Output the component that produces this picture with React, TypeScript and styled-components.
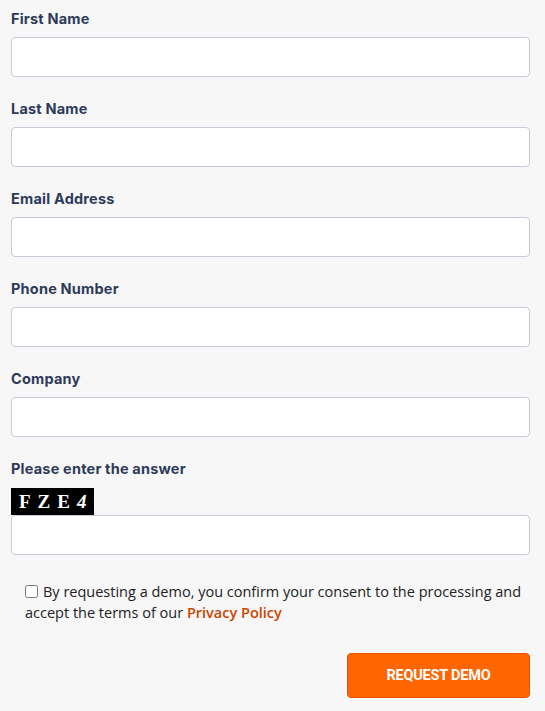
import styled, { createGlobalStyle } from "styled-components";

const GlobalStyle = createGlobalStyle`
    html, body {
        margin: 0;
        padding: 0;
        background: #f7f7f7;
    }
`;

const Form = styled.form`
    width: 545px;
    box-sizing: border-box;
    padding: 9px 15px 13px 11px;
    display: flex;
    flex-direction: column;
`;

const Field = styled.div`
    display: flex;
    flex-direction: column;
    margin-bottom: 22px;
`;

const Label = styled.label`
    font-family: Inter, "Open Sans", sans-serif;
    font-weight: 700;
    font-size: 14.5px;
    letter-spacing: 0.2px;
    line-height: 20px;
    color: #2e3a59;
    margin-bottom: 8px;
`;

const Input = styled.input`
    box-sizing: border-box;
    width: 100%;
    height: 40px;
    border: 1px solid #c3ccd6;
    border-radius: 4px;
    background: #fff;
    font-family: "Open Sans", sans-serif;
    font-size: 14px;
    padding: 0 12px;
    outline: none;
`;

const Captcha = styled.div`
    align-self: flex-start;
    width: 83px;
    height: 27px;
    margin-top: 1px;
    background: #000;
    color: #fff;
    font-family: "Liberation Serif", serif;
    font-weight: bold;
    font-size: 19px;
    line-height: 27px;
    letter-spacing: 7px;
    padding-left: 8px;
    box-sizing: border-box;
    white-space: nowrap;
    overflow: hidden;

    i {
        font-style: italic;
        letter-spacing: 0;
    }
`;

const Consent = styled.div`
    padding: 4px 0 0 14px;
    font-family: "Open Sans", sans-serif;
    font-size: 14.5px;
    line-height: 21px;
    color: #222;

    input {
        margin: 0 5px 0 0;
        width: 13px;
        height: 13px;
        vertical-align: -1px;
    }

    a {
        color: #cc4400;
        font-weight: 600;
        text-decoration: none;
    }
`;

const Actions = styled.div`
    display: flex;
    justify-content: flex-end;
    margin-top: 30px;
`;

const Button = styled.button`
    width: 183px;
    height: 45px;
    background: #ff6600;
    border: 1px solid #e25200;
    border-radius: 4px;
    color: #fff;
    font-family: Roboto, sans-serif;
    font-weight: 700;
    font-size: 14.5px;
    letter-spacing: -0.2px;
    text-transform: uppercase;
    cursor: pointer;
`;

const fields = ["First Name", "Last Name", "Email Address", "Phone Number", "Company"];

function App() {
    return (
        <>
            <GlobalStyle />
            <Form onSubmit={e => e.preventDefault()}>
                {fields.map(name => (
                    <Field key={name}>
                        <Label>{name}</Label>
                        <Input type="text" />
                    </Field>
                ))}
                <Field>
                    <Label>Please enter the answer</Label>
                    <Captcha>FZE<i>4</i></Captcha>
                    <Input type="text" />
                </Field>
                <Consent>
                    <input type="checkbox" id="consent" />
                    <label htmlFor="consent">By requesting a demo, you confirm your consent to the processing and accept the terms of our </label>
                    <a href="#">Privacy Policy</a>
                </Consent>
                <Actions>
                    <Button type="submit">Request Demo</Button>
                </Actions>
            </Form>
        </>
    );
}

export default App;
